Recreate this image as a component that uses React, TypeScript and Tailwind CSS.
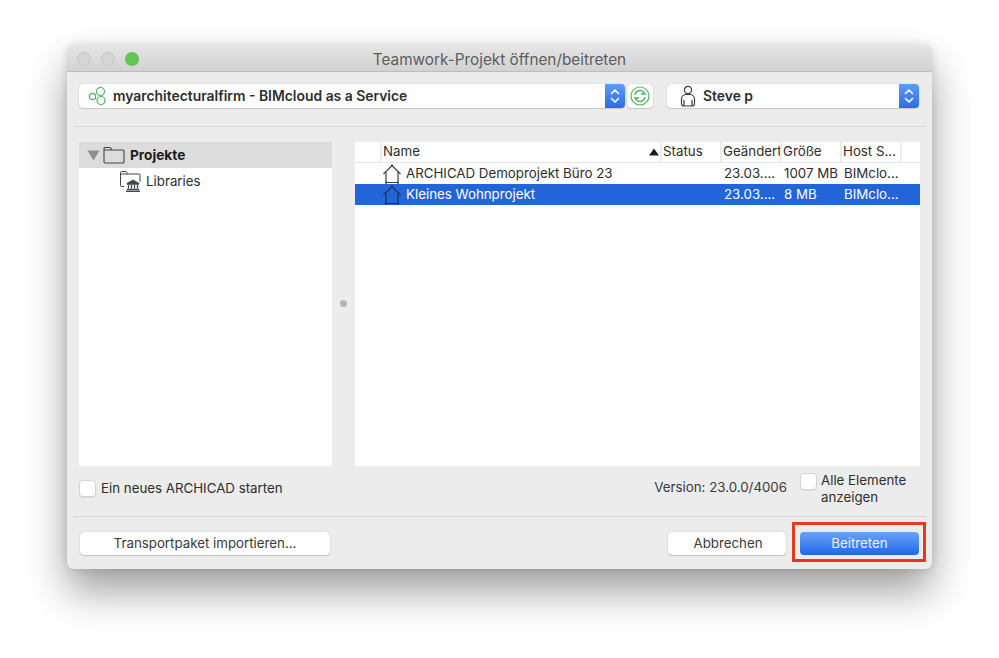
const Stepper = () => (
  <div className="flex h-full w-5 shrink-0 items-center justify-center rounded-r-[4px] bg-gradient-to-b from-[#5f9bf7] to-[#2a6ce8]">
    <svg width="12" height="18" viewBox="0 0 12 18" fill="none" stroke="#fff" strokeWidth="1.6" strokeLinecap="round" strokeLinejoin="round">
      <path d="M2.5 6.5 6 3l3.5 3.5" />
      <path d="M2.5 11.5 6 15l3.5-3.5" />
    </svg>
  </div>
);

const HouseIcon = ({ dark }: { dark?: boolean }) => {
  const color = dark ? "#1c3358" : "#3c4248";
  return (
    <svg width="20" height="20" viewBox="0 0 20 20" fill="none" stroke={color} strokeWidth="1.2">
      <path d="M1.5 10 10 1.5 18.5 10" />
      <path d="M4 8v10.5h12V8" />
      <rect x="9" y="0.6" width="2" height="2" fill={color} stroke="none" />
      <rect x="3.2" y="17.6" width="2" height="2" fill={color} stroke="none" />
      <rect x="15" y="17.6" width="2" height="2" fill={color} stroke="none" />
    </svg>
  );
};

const Checkbox = () => (
  <div className="h-[17px] w-[17px] shrink-0 rounded-[4px] border border-[#d4d4d4] bg-white shadow-[0_1px_1px_rgba(0,0,0,0.08)]" />
);

const HeaderCell = ({ label }: { label: string }) => (
  <div className="whitespace-nowrap border-l-2 border-[#ececec] pl-[1px]">{label}</div>
);

const rows = [
  { name: "ARCHICAD Demoprojekt Büro 23", date: "23.03....", size: "1007 MB", host: "BIMclo..." },
  { name: "Kleines Wohnprojekt", date: "23.03....", size: "8 MB", host: "BIMclo...", selected: true },
];

const columns = "grid grid-cols-[25px_280px_60px_60px_60px_60px_1fr]";

export default function App() {
  return (
    <div
      className="h-[658px] w-[999px] overflow-hidden bg-white pl-[67px] pt-[45px] text-[13.3px] text-[#2e2e2e]"
      style={{ fontFamily: "Inter, 'Liberation Sans', sans-serif" }}
    >
      <div className="flex h-[524px] w-[865px] flex-col overflow-hidden rounded-[7px] bg-[#ececec] shadow-[0_22px_40px_rgba(0,0,0,0.38),0_0_10px_rgba(0,0,0,0.12)]">
        {/* Title bar */}
        <div className="relative flex h-[27px] shrink-0 items-center justify-center border-b border-[#bdbdbd] bg-gradient-to-b from-[#e6e6e6] to-[#d2d2d2] pt-[5px] text-[15.3px] text-[#5c5c5c]">
          <div className="absolute left-[10px] top-[7px] flex gap-[10px]">
            <div className="h-[14px] w-[14px] rounded-full border border-[#c4c4c4] bg-[#d4d4d4]" />
            <div className="h-[14px] w-[14px] rounded-full border border-[#c4c4c4] bg-[#d4d4d4]" />
            <div className="h-[14px] w-[14px] rounded-full bg-[#5fc94f]" />
          </div>
          Teamwork-Projekt öffnen/beitreten
        </div>

        {/* Server + user */}
        <div className="flex shrink-0 items-center pl-3 pr-[13px] pt-3">
          <div className="flex h-6 w-[546px] items-center rounded-[4px] bg-white shadow-[0_0_1px_rgba(0,0,0,0.35),0_1px_1px_rgba(0,0,0,0.12)]">
            <svg className="ml-[9px] shrink-0" width="20" height="20" viewBox="0 0 20 20" fill="none" stroke="#4fb25c" strokeWidth="1.2">
              <circle cx="4.5" cy="10.5" r="3.2" />
              <circle cx="12.5" cy="5.5" r="4" />
              <circle cx="13" cy="14.5" r="4" />
            </svg>
            <span className="ml-[5px] flex-1 truncate pt-[1px] text-[13.9px] font-semibold">myarchitecturalfirm - BIMcloud as a Service</span>
            <Stepper />
          </div>
          <div className="ml-[2px] flex h-6 w-[26px] items-center justify-center rounded-[4px] bg-white shadow-[0_0_1px_rgba(0,0,0,0.35),0_1px_1px_rgba(0,0,0,0.12)]">
            <svg width="20" height="20" viewBox="0 0 20 20" fill="none" stroke="#55b565" strokeWidth="1.2">
              <circle cx="10" cy="10" r="9" />
              <path d="M5 9a5 5 0 0 1 8.5-3L15 8h-4" strokeWidth="1.5" />
              <path d="M15 11a5 5 0 0 1-8.5 3L5 12h4" strokeWidth="1.5" />
            </svg>
          </div>
          <div className="ml-[14px] flex h-6 flex-1 items-center rounded-[4px] bg-white shadow-[0_0_1px_rgba(0,0,0,0.35),0_1px_1px_rgba(0,0,0,0.12)]">
            <svg className="ml-[12px] shrink-0" width="18" height="22" viewBox="0 0 18 22" fill="none" stroke="#3c3c3c" strokeWidth="1.2">
              <circle cx="9" cy="5" r="3.6" />
              <path d="M5 21h8a2.5 2.5 0 0 0 2.5-2.5V14c0-3-2.5-4.500-4.500-4.500H7C5 9.500 2.500 11 2.500 14v4.500A2.500 2.500 0 0 0 5 21Z" />
              <path d="M5 15v6M13 15v6" />
            </svg>
            <span className="ml-[6px] flex-1 pt-[1px] text-[13.9px] font-semibold">Steve p</span>
            <Stepper />
          </div>
        </div>

        <div className="mx-[6px] mt-[18px] h-px shrink-0 bg-[#d6d6d6]" />

        {/* Panels */}
        <div className="mt-[15px] flex h-[324px] shrink-0 pl-3 pr-3">
          <div className="w-[253px] shrink-0 bg-white">
            <div className="flex h-[26px] items-center bg-[#dcdcdc] pl-2">
              <svg width="13" height="11" viewBox="0 0 13 11" className="shrink-0">
                <path d="M0.5 0.5h12L6.500 10.500Z" fill="#8f8f8f" />
              </svg>
              <svg className="ml-[3px] shrink-0" width="22" height="18" viewBox="0 0 22 18" fill="none" stroke="#3d4650" strokeWidth="1.1">
                <path d="M1 16V2.500A1 1 0 0 1 2 1.500h5l2 2.500h11a1 1 0 0 1 1 1V16a1 1 0 0 1-1 1H2a1 1 0 0 1-1-1Z" />
                <path d="M1 4h8" />
              </svg>
              <span className="ml-[5px] text-[13.7px] font-bold text-[#1c1c1c]">Projekte</span>
            </div>
            <div className="flex h-[26px] items-center pl-10">
              <svg className="shrink-0" width="23" height="22" viewBox="0 0 23 22" fill="none" stroke="#3d4650" strokeWidth="1">
                <path d="M1.500 14V2.500a1 1 0 0 1 1-1H7l2 2.500h11a1 1 0 0 1 1 1V12" />
                <path d="M1.500 4h7.500" />
                <path d="M1.500 14v1.500a1 1 0 0 0 1 1H5" />
                <path d="M8 13.500 14 10l6 3.500v.7H8Z" fill="#3d4650" />
                <path d="M9.500 15v3.500M12.500 15v3.500M15.500 15v3.500M18.500 15v3.500" strokeWidth="1.3" />
                <path d="M8 19.500h12M7 21.300h14" strokeWidth="1.3" />
              </svg>
              <span className="ml-[4px] mt-[2px]">Libraries</span>
            </div>
          </div>

          <div className="flex w-[23px] shrink-0 items-center justify-center pb-[2px]">
            <div className="h-[7px] w-[7px] rounded-full bg-[#b5b5b5]" />
          </div>

          <div className="flex-1 bg-white">
            <div className={`${columns} h-[21px] items-center border-b border-[#e4e4e4] pb-[2px]`}>
              <div />
              <div className="relative">
                <HeaderCell label="Name" />
                <svg className="absolute right-[1px] top-[6px]" width="10" height="8" viewBox="0 0 10 8">
                  <path d="M5 0.500 10 7.500H0Z" fill="#1c1c1c" />
                </svg>
              </div>
              <HeaderCell label="Status" />
              <HeaderCell label="Geändert" />
              <HeaderCell label="Größe" />
              <HeaderCell label="Host S..." />
              <div className="h-full border-l-2 border-[#ececec]" />
            </div>
            {rows.map((row) => (
              <div
                key={row.name}
                className={`${columns} h-[21px] items-center ${row.selected ? "bg-[#2265d8] text-white" : ""}`}
              >
                <div />
                <div className="flex items-center pl-[2px]">
                  <HouseIcon dark={row.selected} />
                  <span className="ml-[4px] whitespace-nowrap">{row.name}</span>
                </div>
                <div />
                <div className="whitespace-nowrap pl-[4px]">{row.date}</div>
                <div className="whitespace-nowrap pl-[4px]">{row.size}</div>
                <div className="whitespace-nowrap pl-[4px]">{row.host}</div>
                <div />
              </div>
            ))}
          </div>
        </div>

        {/* Options */}
        <div className="flex h-[50px] shrink-0 items-center justify-between pb-[6px] pl-3 pr-[15px]">
          <div className="flex items-center gap-[5px]">
            <Checkbox />
            <span className="pt-[2px]">Ein neues ARCHICAD starten</span>
          </div>
          <div className="flex items-start self-start pt-[7px]">
            <span className="leading-[28px] text-[#3a3a3a]">Version: 23.0.0/4006</span>
            <div className="ml-[13px]">
              <Checkbox />
            </div>
            <span className="-mt-[1px] ml-[4px] w-[96px] leading-[17px]">Alle Elemente anzeigen</span>
          </div>
        </div>

        <div className="mx-[6px] h-px shrink-0 bg-[#d6d6d6]" />

        {/* Buttons */}
        <div className="flex flex-1 items-start pl-[13px] pr-[13px] pt-[15px] text-[#3a3a3a]">
          <button className="h-[23px] w-[250px] rounded-[4px] bg-white shadow-[0_0_1px_rgba(0,0,0,0.35),0_1px_1px_rgba(0,0,0,0.15)]">
            Transportpaket importieren...
          </button>
          <button className="ml-auto h-[23px] w-[118px] rounded-[4px] bg-white pl-[2px] shadow-[0_0_1px_rgba(0,0,0,0.35),0_1px_1px_rgba(0,0,0,0.15)]">
            Abbrechen
          </button>
          <div className="relative ml-[14px]">
            <button className="h-[23px] w-[119px] rounded-[4px] bg-gradient-to-b from-[#6ba2f8] to-[#1f66e8] text-[#eaf2ff]">
              Beitreten
            </button>
            <div className="absolute -bottom-[7px] -left-[8px] -right-[7px] -top-[10px] border-[3px] border-[#e63a20]" />
          </div>
        </div>
      </div>
    </div>
  );
}
